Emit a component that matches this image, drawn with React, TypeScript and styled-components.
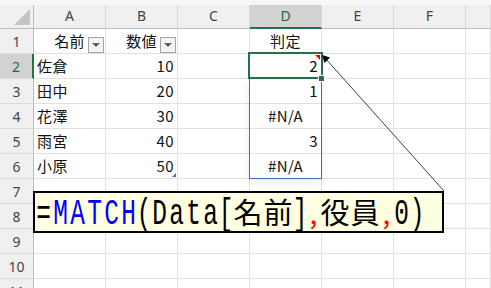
import React from "react";
import styled, { createGlobalStyle } from "styled-components";

const GlobalStyle = createGlobalStyle`
  html, body {
    margin: 0;
    padding: 0;
    background: #ffffff;
    overflow: hidden;
  }
  body {
    font-family: "Noto Sans CJK JP", "Noto Sans", sans-serif;
  }
`;

type Align = "left" | "right" | "center";

interface CellData {
  text?: string;
  align?: Align;
  filter?: boolean;
}

const COLUMNS = ["A", "B", "C", "D", "E", "F"];
const SELECTED_COL = 3;
const SELECTED_ROW = 2;

const rows: CellData[][] = [
  [{ text: "名前", align: "right", filter: true }, { text: "数値", align: "right", filter: true }, {}, { text: "判定", align: "center" }, {}, {}],
  [{ text: "佐倉" }, { text: "10", align: "right" }, {}, { text: "2", align: "right" }, {}, {}],
  [{ text: "田中" }, { text: "20", align: "right" }, {}, { text: "1", align: "right" }, {}, {}],
  [{ text: "花澤" }, { text: "30", align: "right" }, {}, { text: "#N/A", align: "center" }, {}, {}],
  [{ text: "雨宮" }, { text: "40", align: "right" }, {}, { text: "3", align: "right" }, {}, {}],
  [{ text: "小原" }, { text: "50", align: "right" }, {}, { text: "#N/A", align: "center" }, {}, {}],
  [{}, {}, {}, {}, {}, {}],
  [{}, {}, {}, {}, {}, {}],
  [{}, {}, {}, {}, {}, {}],
  [{}, {}, {}, {}, {}, {}],
  [{}, {}, {}, {}, {}, {}],
];

// formula tokens: colour per token
const formula: { text: string; color: string }[] = [
  { text: "=", color: "#000000" },
  { text: "MATCH", color: "#0000ff" },
  { text: "(Data[名前]", color: "#000000" },
  { text: ",", color: "#ff0000" },
  { text: "役員", color: "#000000" },
  { text: ",", color: "#ff0000" },
  { text: "0)", color: "#000000" },
];

type GlyphKind = "wide" | "comma" | "narrow";

const kindOf = (ch: string): GlyphKind => {
  if (ch.charCodeAt(0) > 0x2e80) return "wide";
  if (ch === ",") return "comma";
  return "narrow";
};

const glyphWidth = (ch: string) => {
  const kind = kindOf(ch);
  if (kind === "wide") return 30;
  if (kind === "comma") return 13;
  if ("()[]".includes(ch)) return 14;
  return 17;
};

const App = () => {
  return (
    <Page>
      <GlobalStyle />
      <TopStrip />
      <Sheet>
        <Corner />
        {COLUMNS.map((c, i) => (
          <ColHeader key={c} $selected={i === SELECTED_COL}>
            {c}
          </ColHeader>
        ))}
        <ColHeader $selected={false} />

        {rows.map((row, r) => (
          <React.Fragment key={r}>
            <RowHeader $selected={r + 1 === SELECTED_ROW}>{r + 1}</RowHeader>
            {row.map((cell, c) => (
              <Cell key={c} $align={cell.align || "left"} $filter={!!cell.filter}>
                {cell.text && <CellText>{cell.text}</CellText>}
                {cell.filter && <FilterButton />}
                {r === 1 && c === SELECTED_COL && (
                  <>
                    <SelectionBorder />
                    <CommentMark />
                    <FillHandle />
                  </>
                )}
                {r === 2 && c === SELECTED_COL && <RangeBox />}
                {r === 5 && c === 1 && <ResizeHandle />}
              </Cell>
            ))}
            <Cell $align="left" $filter={false} />
          </React.Fragment>
        ))}
      </Sheet>

      <Connector width="491" height="288" viewBox="0 0 491 288">
        <line x1="444" y1="191" x2="325" y2="58" stroke="#404040" strokeWidth="1" />
        <polygon points="322,55 330,57.5 324.5,63" fill="#000000" />
      </Connector>

      <Callout>
        {formula.map((tok, t) =>
          Array.from(tok.text).map((ch, k) => (
            <Glyph key={`${t}-${k}`} $kind={kindOf(ch)} $w={glyphWidth(ch)} style={{ color: tok.color }}>
              {ch}
            </Glyph>
          ))
        )}
      </Callout>
    </Page>
  );
};

export default App;

const Page = styled.div`
  position: relative;
  width: 491px;
  height: 288px;
  overflow: hidden;
  background: #ffffff;
`;

const TopStrip = styled.div`
  height: 5px;
  background: #f7f7f7;
`;

const Sheet = styled.div`
  display: grid;
  grid-template-columns: 34px repeat(6, 72px) 1fr;
  grid-template-rows: 24px;
  grid-auto-rows: 25px;
`;

const Corner = styled.div`
  position: relative;
  background: #f0f0f0;
  border-right: 1px solid #bdbdbd;
  border-bottom: 1px solid #bdbdbd;

  &::after {
    content: "";
    position: absolute;
    right: 3px;
    bottom: 3px;
    width: 16px;
    height: 16px;
    background: #c4c4c4;
    clip-path: polygon(100% 0, 100% 100%, 0 100%);
  }
`;

const ColHeader = styled.div<{ $selected: boolean }>`
  display: flex;
  justify-content: center;
  align-items: flex-start;
  padding-top: 3px;
  box-sizing: border-box;
  background: ${(p) => (p.$selected ? "#d2d2d2" : "#f0f0f0")};
  border-right: 1px solid #d9d9d9;
  border-bottom: ${(p) => (p.$selected ? "2px solid #217346" : "1px solid #bdbdbd")};
  color: ${(p) => (p.$selected ? "#1e6b41" : "#444444")};
  font-family: "Noto Sans", sans-serif;
  font-size: 14px;
  line-height: 16px;
`;

const RowHeader = styled.div<{ $selected: boolean }>`
  display: flex;
  justify-content: center;
  align-items: center;
  box-sizing: border-box;
  background: ${(p) => (p.$selected ? "#d2d2d2" : "#f0f0f0")};
  border-right: ${(p) => (p.$selected ? "2px solid #217346" : "1px solid #bdbdbd")};
  border-bottom: 1px solid #d9d9d9;
  color: ${(p) => (p.$selected ? "#1e6b41" : "#444444")};
  font-family: "Noto Sans", sans-serif;
  font-size: 14px;
`;

const Cell = styled.div<{ $align: Align; $filter: boolean }>`
  position: relative;
  display: flex;
  align-items: center;
  justify-content: ${(p) =>
    p.$align === "right" ? "flex-end" : p.$align === "center" ? "center" : "flex-start"};
  box-sizing: border-box;
  padding: ${(p) => (p.$filter ? "0 1px 0 3px" : "0 3px")};
  border-right: 1px solid #e1e1e1;
  border-bottom: 1px solid #e1e1e1;
  color: #111111;
  font-size: 15px;
`;

const CellText = styled.span`
  line-height: 18px;
  letter-spacing: 0.4px;
`;

const FilterButton = styled.span`
  position: relative;
  align-self: flex-end;
  width: 16px;
  height: 16px;
  margin: 0 0 0 3px;
  box-sizing: border-box;
  border: 1px solid #a6a6a6;
  background: #f4f4f4;

  &::after {
    content: "";
    position: absolute;
    left: 3px;
    top: 5px;
    border-left: 4px solid transparent;
    border-right: 4px solid transparent;
    border-top: 4px solid #5f5f5f;
  }
`;

const SelectionBorder = styled.div`
  position: absolute;
  left: -2px;
  top: -2px;
  right: -2px;
  bottom: -1px;
  border: 2px solid #217346;
  z-index: 3;
`;

const CommentMark = styled.div`
  position: absolute;
  right: 1px;
  top: 1px;
  width: 5px;
  height: 5px;
  background: #ff0000;
  clip-path: polygon(0 0, 100% 0, 100% 100%);
  z-index: 4;
`;

const FillHandle = styled.div`
  position: absolute;
  right: -4px;
  bottom: -4px;
  width: 5px;
  height: 5px;
  background: #217346;
  border: 1px solid #ffffff;
  z-index: 5;
`;

const RangeBox = styled.div`
  position: absolute;
  left: -1px;
  top: -1px;
  width: 73px;
  height: 101px;
  box-sizing: border-box;
  border: 1px solid #3e6cc4;
  box-shadow: 0 4px 8px rgba(0, 0, 0, 0.08);
  z-index: 2;
`;

const ResizeHandle = styled.div`
  position: absolute;
  right: 1px;
  bottom: 1px;
  width: 4px;
  height: 4px;
  background: #4a6cc4;
  clip-path: polygon(100% 0, 100% 100%, 0 100%);
`;

const Connector = styled.svg`
  position: absolute;
  left: 0;
  top: 0;
  pointer-events: none;
  z-index: 6;
`;

const Callout = styled.div`
  position: absolute;
  left: 33px;
  top: 191px;
  width: 411px;
  height: 42px;
  box-sizing: border-box;
  display: flex;
  align-items: baseline;
  border: 2px solid #000000;
  background: #ffffe1;
  z-index: 7;
  line-height: 36px;
`;

const Glyph = styled.span<{ $kind: GlyphKind; $w: number }>`
  display: inline-flex;
  justify-content: center;
  width: ${(p) => p.$w}px;
  flex: none;
  overflow: visible;
  white-space: nowrap;
  font-family: ${(p) => (p.$kind === "narrow" ? '"Liberation Mono", monospace' : '"Noto Sans CJK JP", sans-serif')};
  font-size: ${(p) => (p.$kind === "wide" ? "29px" : p.$kind === "comma" ? "28px" : "37px")};
  transform: ${(p) => (p.$kind === "narrow" ? "scaleX(0.66)" : "none")};
`;
